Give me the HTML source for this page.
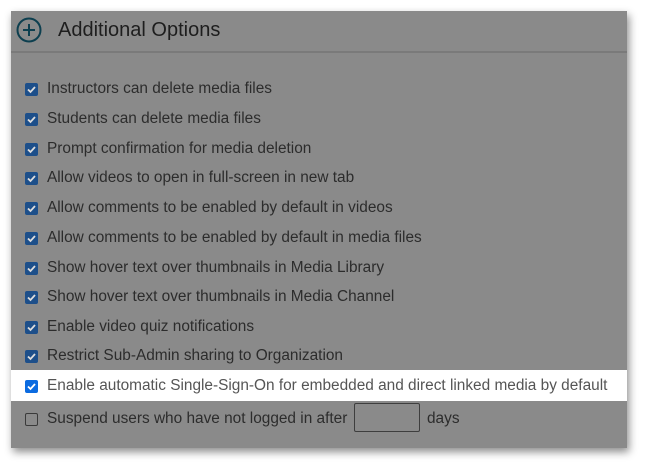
<!DOCTYPE html>
<html><head><style>
body{margin:0;width:646px;height:467px;background:#fff;font-family:"Liberation Sans",sans-serif;position:relative;overflow:hidden}
.panel{position:absolute;left:11px;top:11px;width:616px;height:437px;background:#8a8a8a;box-shadow:2px 4px 8px rgba(0,0,0,.45)}
.hdr{position:absolute;left:0;top:0;width:616px;height:40px;border-bottom:2px solid #7a7a7a}
.title{position:absolute;left:47px;top:8px;font-size:20px;color:#1e1e1e}
.row{position:absolute;left:0;width:616px;height:30px;font-size:15.4px;color:#2c2c2c}
.row span{position:absolute;left:36px;top:7px;white-space:nowrap}
.cb{position:absolute;left:14px;top:10px;width:13px;height:13px;border-radius:2px;background:#1d4f8a}
.cb svg{position:absolute;left:1px;top:1px}
.hl{background:#fff;color:#555}
.hl .cb{background:#0b6be0}
.un{background:none;border:1px solid #3a3a3a;width:11px;height:11px}
.box{position:absolute;left:354px;top:403px;width:64px;height:27px;border:1px solid #3e3e3e;border-radius:2px}
</style></head><body>
<div class="panel">
<div class="hdr">
<svg style="position:absolute;left:5px;top:6px" width="26" height="26" viewBox="0 0 26 26"><circle cx="13" cy="13" r="11.5" fill="none" stroke="#0d3f4f" stroke-width="2"/><path d="M13 7v12M7 13h12" stroke="#0d3f4f" stroke-width="2"/></svg>
<div class="title">Additional Options</div>
</div>
<div class="row" style="top:62px"><div class="cb"><svg width="11" height="11"><path d="M2 5.5l2.5 2.5L9 3" stroke="#ddd" stroke-width="1.8" fill="none"/></svg></div><span>Instructors can delete media files</span></div>
<div class="row" style="top:92px"><div class="cb"><svg width="11" height="11"><path d="M2 5.5l2.5 2.5L9 3" stroke="#ddd" stroke-width="1.8" fill="none"/></svg></div><span>Students can delete media files</span></div>
<div class="row" style="top:122px"><div class="cb"><svg width="11" height="11"><path d="M2 5.5l2.5 2.5L9 3" stroke="#ddd" stroke-width="1.8" fill="none"/></svg></div><span>Prompt confirmation for media deletion</span></div>
<div class="row" style="top:151px"><div class="cb"><svg width="11" height="11"><path d="M2 5.5l2.5 2.5L9 3" stroke="#ddd" stroke-width="1.8" fill="none"/></svg></div><span>Allow videos to open in full-screen in new tab</span></div>
<div class="row" style="top:181px"><div class="cb"><svg width="11" height="11"><path d="M2 5.5l2.5 2.5L9 3" stroke="#ddd" stroke-width="1.8" fill="none"/></svg></div><span>Allow comments to be enabled by default in videos</span></div>
<div class="row" style="top:211px"><div class="cb"><svg width="11" height="11"><path d="M2 5.5l2.5 2.5L9 3" stroke="#ddd" stroke-width="1.8" fill="none"/></svg></div><span>Allow comments to be enabled by default in media files</span></div>
<div class="row" style="top:241px"><div class="cb"><svg width="11" height="11"><path d="M2 5.5l2.5 2.5L9 3" stroke="#ddd" stroke-width="1.8" fill="none"/></svg></div><span>Show hover text over thumbnails in Media Library</span></div>
<div class="row" style="top:270px"><div class="cb"><svg width="11" height="11"><path d="M2 5.5l2.5 2.5L9 3" stroke="#ddd" stroke-width="1.8" fill="none"/></svg></div><span>Show hover text over thumbnails in Media Channel</span></div>
<div class="row" style="top:300px"><div class="cb"><svg width="11" height="11"><path d="M2 5.5l2.5 2.5L9 3" stroke="#ddd" stroke-width="1.8" fill="none"/></svg></div><span>Enable video quiz notifications</span></div>
<div class="row" style="top:329px"><div class="cb"><svg width="11" height="11"><path d="M2 5.5l2.5 2.5L9 3" stroke="#ddd" stroke-width="1.8" fill="none"/></svg></div><span>Restrict Sub-Admin sharing to Organization</span></div>
<div class="row hl" style="top:359px;height:31px"><div class="cb"><svg width="11" height="11"><path d="M2 5.5l2.5 2.5L9 3" stroke="#fff" stroke-width="1.8" fill="none"/></svg></div><span>Enable automatic Single-Sign-On for embedded and direct linked media by default</span></div>
<div class="row" style="top:392px"><div class="cb un"></div><span>Suspend users who have not logged in after</span><span style="left:416px">days</span></div>
</div>
<div class="box"></div>
</body></html>
